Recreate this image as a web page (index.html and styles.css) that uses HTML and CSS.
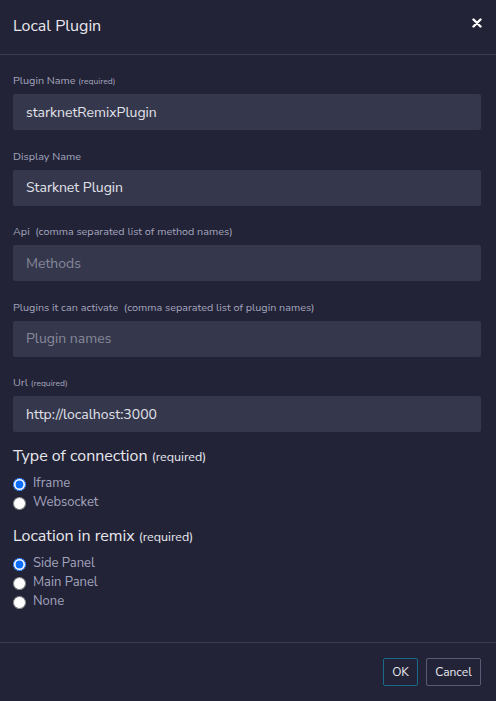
FILE: index.html
```html
<!DOCTYPE html>
<html>
<head>
<meta charset="utf-8">
<link rel="stylesheet" href="styles.css">
</head>
<body>
<div class="modal">
  <header class="modal-header">
    <h1 class="title">Local Plugin</h1>
    <button class="close" aria-label="close">
      <svg width="10" height="10" viewBox="0 0 10 10"><path d="M1.5 1.5L8.5 8.5M8.5 1.5L1.5 8.5" stroke="#fff" stroke-width="2.4" stroke-linecap="round"/></svg>
    </button>
  </header>
  <div class="modal-body">
    <div class="field">
      <label class="label">Plugin Name <small class="req">(required)</small></label>
      <input class="input" value="starknetRemixPlugin">
    </div>
    <div class="field">
      <label class="label">Display Name</label>
      <input class="input" value="Starknet Plugin">
    </div>
    <div class="field">
      <label class="label">Api&nbsp; (comma separated list of method names)</label>
      <input class="input" placeholder="Methods">
    </div>
    <div class="field">
      <label class="label">Plugins it can activate&nbsp; (comma separated list of plugin names)</label>
      <input class="input" placeholder="Plugin names">
    </div>
    <div class="field">
      <label class="label">Url <small class="req">(required)</small></label>
      <input class="input" value="http://localhost:3000">
    </div>
    <div class="group">
      <h2 class="group-title">Type of connection <small class="group-req">(required)</small></h2>
      <label class="radio"><input type="radio" name="conn" checked><span>Iframe</span></label>
      <label class="radio"><input type="radio" name="conn"><span>Websocket</span></label>
    </div>
    <div class="group">
      <h2 class="group-title">Location in remix <small class="group-req">(required)</small></h2>
      <label class="radio"><input type="radio" name="loc" checked><span>Side Panel</span></label>
      <label class="radio"><input type="radio" name="loc"><span>Main Panel</span></label>
      <label class="radio"><input type="radio" name="loc"><span>None</span></label>
    </div>
  </div>
  <footer class="modal-footer">
    <button class="btn btn-ok">OK</button>
    <button class="btn btn-cancel">Cancel</button>
  </footer>
</div>
</body>
</html>
```
FILE: styles.css
```css
* { box-sizing: border-box; }
html, body { margin: 0; padding: 0; background: #222336; }
body {
  font-family: "Nunito Sans", Lato, "Noto Sans", sans-serif;
  color: #a2a3bd;
  width: 496px;
  height: 701px;
  overflow: hidden;
}
.modal { display: flex; flex-direction: column; height: 701px; }
.modal-header {
  display: flex;
  justify-content: space-between;
  align-items: flex-start;
  height: 55px;
  border-bottom: 1px solid #3a3c52;
  padding: 16px 13px 0 13px;
}
.title {
  margin: 0;
  font-size: 16px;
  font-weight: 400;
  color: #e8e8ee;
  line-height: 20px;
}
.close {
  background: none;
  border: 0;
  padding: 0;
  margin-top: 2px;
  margin-right: 1px;
  width: 10px;
  height: 10px;
  display: flex;
}
.modal-body { flex: 1; padding: 18px 15px 0 13px; }
.field { margin-bottom: 18.5px; }
.label {
  display: block;
  font-size: 10.8px;
  line-height: 15px;
  height: 15px;
  color: #a2a3bd;
  margin-bottom: 6px;
}
.req { font-size: 8.5px; line-height: 1; }
.input {
  display: block;
  width: 100%;
  height: 36px;
  border: 0;
  border-radius: 2px;
  background: #35384c;
  color: #e2e2ea;
  padding: 0 13px;
  font-family: inherit;
  font-size: 14px;
  outline: none;
}
.input::placeholder { color: #868799; }
.group { margin-bottom: 19px; }
.group-title {
  margin: -4.5px 0 7.5px 0;
  font-size: 16px;
  font-weight: 400;
  color: #e8e8ee;
  line-height: 20px;
  height: 20px;
}
.group-req { font-size: 12.5px; line-height: 1; }
.radio {
  display: flex;
  align-items: center;
  height: 19px;
  font-size: 13px;
  color: #a2a3bd;
}
.radio input {
  margin: 2px 7px 0 0;
  width: 13px;
  height: 13px;
  accent-color: #0d6efd;
}
.modal-footer {
  height: 59px;
  border-top: 1px solid #3a3c52;
  display: flex;
  justify-content: flex-end;
  align-items: center;
  gap: 8px;
  padding: 0 15px 0 0;
}
.btn {
  height: 28px;
  background: transparent;
  color: #e8e8ee;
  font-family: inherit;
  font-size: 12px;
  border-radius: 2px;
  padding: 0 8px;
}
.btn-ok { border: 1px solid #186b8a; width: 35px; padding: 0; }
.btn-cancel { border: 1px solid #595c76; width: 55px; padding: 0; }
```
